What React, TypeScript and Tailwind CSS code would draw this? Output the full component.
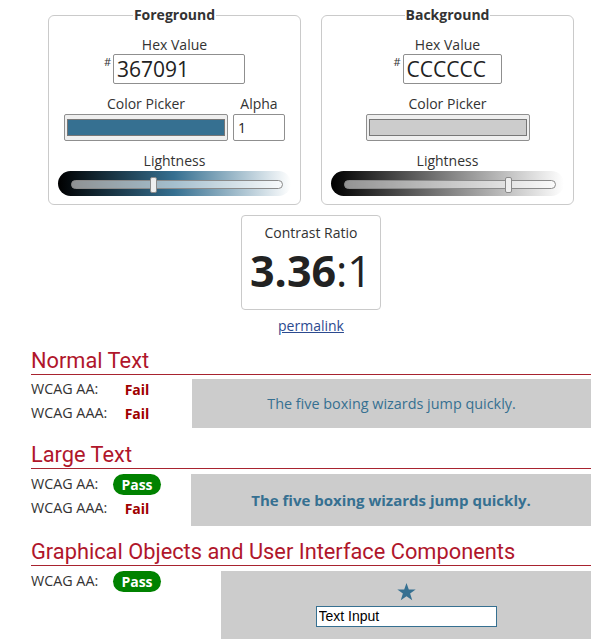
import React from "react";

const FG = "#367091";

const Slider = ({ gradient, thumb }: { gradient: string; thumb: string }) => (
  <div className={`relative mx-px mt-px h-[25px] rounded-full ${gradient}`}>
    <div className="absolute left-[13px] right-[8px] top-[9px] h-[9px] rounded-full border border-[#8a8a8a] bg-white/55" />
    <div className={`absolute top-[6px] h-[16px] w-[7px] rounded-[2px] border border-[#8a8a8a] bg-[#efefef] ${thumb}`} />
  </div>
);

const Label = ({ children }: { children: React.ReactNode }) => (
  <div className="mt-[11px] text-center text-[14px] leading-[18px] text-[#333]">{children}</div>
);

const Swatch = ({ color }: { color: string }) => (
  <div className="h-[27px] w-[164px] rounded-[2px] border border-[#8f8f8f] bg-[#efefef] px-[2px] py-[4px]">
    <div className={`h-full w-full border border-[#777] ${color}`} />
  </div>
);

const Heading = ({ children }: { children: React.ReactNode }) => (
  <h2 className="border-b border-[#a8232f] font-['Roboto',sans-serif] text-[21.8px] leading-[26px] text-[#b0162b]">
    {children}
  </h2>
);

const Fail = () => <span className="text-[14px] font-bold text-[#a00000]">Fail</span>;
const Pass = () => (
  <span className="rounded-full bg-[#008200] px-[8px] py-[1px] text-[14px] font-bold leading-[19px] text-white">Pass</span>
);

const Row = ({ label, children }: { label: string; children: React.ReactNode }) => (
  <div className="flex h-6 items-center">
    <div className="w-[82px] text-[14.3px]">{label}</div>
    <div className="flex w-[48px] justify-center">{children}</div>
  </div>
);

export default function App() {
  return (
    <div className="w-[593px] bg-white pt-[5px] font-['Open_Sans',sans-serif] text-[14px] text-[#333]">
      <div className="ml-[31px] w-[560px]">
        <div className="flex justify-center gap-5">
          <fieldset className="w-[252px] rounded-[6px] border border-[#cacaca] px-[8px] pb-[8px]">
            <legend className="mx-auto px-px text-[14px] font-bold leading-[20px] text-[#333]">Foreground</legend>
            <Label>Hex Value</Label>
            <div className="flex justify-center">
              <span className="mr-[2px] mt-[1px] text-[11px] leading-[14px]">#</span>
              <input
                readOnly
                value="367091"
                className="h-[30px] w-[132px] rounded-[2px] border border-[#8f8f8f] px-[3px] text-[21px] leading-[28px] text-[#222]"
              />
            </div>
            <div className="flex gap-[5px] px-[7px]">
              <div>
                <Label>Color Picker</Label>
                <div className="mt-px">
                  <Swatch color="bg-[#367091]" />
                </div>
              </div>
              <div>
                <Label>Alpha</Label>
                <input
                  readOnly
                  value="1"
                  className="mt-px h-[27px] w-[52px] rounded-[2px] border border-[#8f8f8f] px-[4px] text-[14px] text-[#222]"
                />
              </div>
            </div>
            <Label>Lightness</Label>
            <Slider gradient="bg-[linear-gradient(to_right,#000_0%,#367091_50%,#fff_100%)]" thumb="left-[92px]" />
          </fieldset>

          <fieldset className="w-[253px] rounded-[6px] border border-[#cacaca] px-[8px] pb-[8px]">
            <legend className="mx-auto px-px text-[14px] font-bold leading-[20px] text-[#333]">Background</legend>
            <Label>Hex Value</Label>
            <div className="flex justify-center">
              <span className="mr-[2px] mt-[1px] text-[11px] leading-[14px]">#</span>
              <input
                readOnly
                value="CCCCCC"
                className="h-[30px] w-[99px] rounded-[2px] border border-[#8f8f8f] px-[3px] text-[21px] leading-[28px] text-[#222]"
              />
            </div>
            <Label>Color Picker</Label>
            <div className="mt-px flex justify-center">
              <Swatch color="bg-[#cccccc]" />
            </div>
            <Label>Lightness</Label>
            <Slider gradient="bg-[linear-gradient(to_right,#000_0%,#808080_50%,#fff_100%)]" thumb="left-[174px]" />
          </fieldset>
        </div>

        <div className="mt-[10px] flex flex-col items-center">
          <div className="h-[95px] w-[140px] rounded-[4px] border border-[#cacaca] pt-[7px] text-center">
            <div className="leading-[20px]">Contrast Ratio</div>
            <div className="mt-[1px] text-[43px] leading-[54px] text-[#222]">
              <span className="font-bold">3.36</span>:1
            </div>
          </div>
          <a href="#" className="mt-[6px] leading-[20px] text-[#2c4a8f] underline">
            permalink
          </a>
        </div>

        <div className="mt-[12px]">
          <Heading>Normal Text</Heading>
          <div className="mt-[2px] flex">
            <div className="w-[161px]">
              <Row label="WCAG AA:"><Fail /></Row>
              <Row label="WCAG AAA:"><Fail /></Row>
            </div>
            <div className="mt-[2px] flex h-[49px] flex-1 items-center justify-center bg-[#cccccc] text-[14.4px] text-[#367091]">
              The five boxing wizards jump quickly.
            </div>
          </div>
        </div>

        <div className="mt-[14px]">
          <Heading>Large Text</Heading>
          <div className="mt-[3px] flex">
            <div className="w-[160px]">
              <Row label="WCAG AA:"><Pass /></Row>
              <Row label="WCAG AAA:"><Fail /></Row>
            </div>
            <div className="mt-[2px] flex h-[52px] flex-1 items-center justify-center bg-[#cccccc] text-[15px] font-bold text-[#367091]">
              The five boxing wizards jump quickly.
            </div>
          </div>
        </div>

        <div className="mt-[13px]">
          <Heading>Graphical Objects and User Interface Components</Heading>
          <div className="mt-[3px] flex">
            <div className="w-[190px]">
              <Row label="WCAG AA:"><Pass /></Row>
            </div>
            <div className="mt-[2px] flex h-[70px] flex-1 flex-col items-center bg-[#cccccc] pt-[12px]">
              <svg width="19" height="18" viewBox="0 0 24 23" fill={FG}>
                <path d="M12 0l2.94 8.26h8.76l-7.08 5.2 2.7 8.54L12 16.8 4.68 22l2.7-8.54L.3 8.26h8.76z" />
              </svg>
              <input
                readOnly
                value="Text Input"
                className="mt-[5px] h-[21px] w-[181px] border border-[#367091] bg-white px-[2px] font-['Liberation_Sans',sans-serif] text-[14px] text-black"
              />
            </div>
          </div>
        </div>
      </div>
    </div>
  );
}
